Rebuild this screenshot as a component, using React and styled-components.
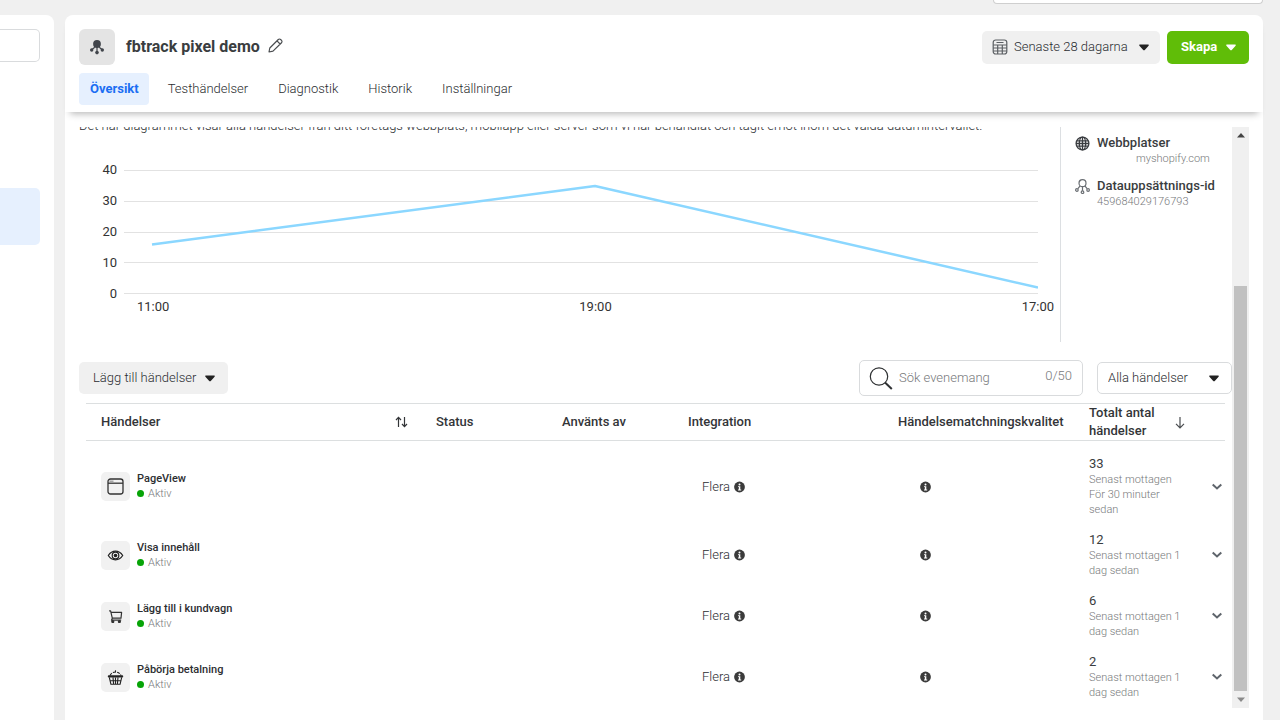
import React from "react";
import styled, { createGlobalStyle, css } from "styled-components";

const GlobalStyle = createGlobalStyle`
  *, *::before, *::after { box-sizing: border-box; }
  body {
    margin: 0;
    background: #f0f0f0;
    color: #2a2d30;
    font: 300 13px/18px Roboto, "Liberation Sans", sans-serif;
  }
  button, input, select { font: inherit; color: inherit; }
  svg { display: block; flex: none; }
`;

const Page = styled.div`
  display: flex;
  flex-direction: column;
  height: 100vh;
  min-height: 600px;
  overflow: hidden;
`;

const TopBar = styled.div`
  display: flex;
  justify-content: flex-end;
  align-items: flex-start;
  height: 15px;
  padding-right: 17px;
`;

const AccountField = styled.div`
  width: 270px;
  height: 4px;
  background: #fff;
  border: 1px solid #cfcfcf;
  border-top: 0;
  border-radius: 0 0 4px 4px;
`;

const Columns = styled.div`
  display: flex;
  flex: 1;
  gap: 11px;
  min-height: 0;
  padding-right: 17px;
`;

const SidePanel = styled.aside`
  display: flex;
  flex-direction: column;
  gap: 126px;
  width: 54px;
  padding: 14px 14px 0 0;
  background: #fff;
  border-radius: 0 8px 0 0;
`;

const SideSearch = styled.input`
  width: 100%;
  height: 33px;
  background: #fff;
  border: 1px solid #d9dbdd;
  border-left: 0;
  border-radius: 0 5px 5px 0;
`;

const SideItem = styled.a`
  display: block;
  height: 57px;
  background: #e6f0fe;
  border-radius: 0 5px 5px 0;
`;

const Main = styled.main`
  display: flex;
  flex: 1;
  flex-direction: column;
  min-width: 0;
  background: #fff;
  border-radius: 8px 8px 0 0;
`;

const Header = styled.header`
  display: flex;
  flex-direction: column;
  gap: 8px;
  padding: 14px 14px 7px;
  border-radius: 8px 8px 0 0;
  box-shadow: 0 7px 7px -5px rgba(0, 0, 0, 0.28);
`;

const HeaderRow = styled.div`
  display: flex;
  align-items: center;
  height: 36px;
`;

const PixelBadge = styled.span`
  display: grid;
  place-items: center;
  width: 36px;
  height: 36px;
  background: #e4e4e4;
  border-radius: 6px;
`;

const Title = styled.h1`
  margin: 0 8px 0 11px;
  color: #3a3d40;
  font-size: 16px;
  line-height: 20px;
  font-weight: 700;
`;

const IconButton = styled.button`
  display: grid;
  place-items: center;
  padding: 0;
  background: none;
  border: 0;
`;

const EditButton = styled(IconButton)`
  padding-bottom: 4px;
`;

const Actions = styled.div`
  display: flex;
  gap: 7px;
  margin-left: auto;
`;

const box = css`
  display: flex;
  align-items: center;
  border-radius: 5px;
  border: 1px solid ${(p) => (p.$outlined ? "#d9dbdd" : "transparent")};
  background: ${(p) => (p.$outlined ? "#fff" : p.$primary ? "#60bd08" : "#f0f0f0")};
`;

const SelectBox = styled.label`
  ${box}
  gap: 6px;
  width: ${(p) => p.$width}px;
  height: ${(p) => p.$height}px;
  padding: 0 ${(p) => (p.$outlined ? 12 : 10)}px 0 ${(p) => (p.$outlined ? 10 : 9)}px;
`;

const Select = styled.select`
  flex: 1;
  min-width: 0;
  padding: 0;
  appearance: none;
  background: none;
  border: 0;
`;

const MenuButton = styled.button`
  ${box}
  justify-content: space-between;
  width: ${(p) => p.$width}px;
  height: ${(p) => p.$height}px;
  padding: 0 12px 0 13px;
  color: ${(p) => (p.$primary ? "#fff" : "inherit")};
  font-weight: ${(p) => (p.$primary ? 700 : 300)};
`;

const Tabs = styled.nav`
  display: flex;
  gap: 8px;
`;

const Tab = styled.a`
  padding: 7px ${(p) => (p.$active ? 10 : 11)}px 7px 11px;
  border-radius: 4px;
  color: ${(p) => (p.$active ? "#1b6ef3" : "inherit")};
  background: ${(p) => (p.$active ? "#e6f0fe" : "transparent")};
  font-weight: ${(p) => (p.$active ? 700 : 300)};
  text-decoration: none;
`;

const ScrollRegion = styled.div`
  display: flex;
  flex: 1;
  min-height: 0;
  margin: 15px 14px 12px;
`;

const Content = styled.div`
  flex: 1;
  min-width: 0;
  overflow: hidden;
`;

const Overview = styled.section`
  display: flex;
  height: 215px;
`;

const ChartPane = styled.div`
  flex: 1;
  min-width: 0;
`;

const Description = styled.p`
  margin: -10px 0 27px;
  white-space: nowrap;
`;

const Chart = styled.figure`
  display: grid;
  grid-template-columns: 38px 1fr;
  column-gap: 7px;
  margin: 0;
  padding-right: 22px;
  color: #333;
  font-weight: 400;
`;

const YAxis = styled.div`
  display: flex;
  flex-direction: column;
  justify-content: space-between;
  height: 140px;
  line-height: 16px;
  text-align: right;
`;

const Plot = styled.svg`
  width: 100%;
  height: 140px;
`;

const XAxis = styled.div`
  display: flex;
  grid-column: 2;
  justify-content: space-between;
  margin: -4px -16px 0 13px;
`;

const Details = styled.aside`
  display: flex;
  flex-direction: column;
  gap: 11px;
  width: 172px;
  padding: 8px 0 0 14px;
  border-left: 1px solid #dcdfe2;
`;

const Detail = styled.div`
  display: flex;
  gap: 7px;
  line-height: 16px;
`;

const DetailIcon = styled.span`
  padding-top: 1px;
`;

const DetailName = styled.div`
  color: #3a3d40;
  font-weight: 500;
`;

const Muted = styled.div`
  padding-left: ${(p) => p.$indent || 0}px;
  color: #77797b;
  font-size: 11px;
  line-height: ${(p) => p.$line || 15}px;
`;

const Toolbar = styled.div`
  display: flex;
  align-items: center;
  gap: 14px;
  height: 36px;
  margin: 18px 0 7px;
`;

const SearchBox = styled.label`
  display: flex;
  align-items: center;
  gap: 6px;
  width: 224px;
  height: 36px;
  margin-left: auto;
  padding: 0 10px 0 8px;
  border: 1px solid #d9dbdd;
  border-radius: 5px;
  color: #77797b;
`;

const SearchInput = styled.input`
  flex: 1;
  min-width: 0;
  padding: 0;
  background: none;
  border: 0;
  &::placeholder { color: #77797b; opacity: 1; }
`;

const Counter = styled.span`
  padding-bottom: 4px;
`;

const TableWrap = styled.div`
  padding: 0 7px;
`;

const Table = styled.table`
  width: 100%;
  table-layout: fixed;
  border-collapse: separate;
  border-spacing: 0;
`;

const Col = styled.col`
  width: ${(p) => (p.$width ? `${p.$width}px` : "auto")};
`;

const Th = styled.th`
  height: 38px;
  padding: 0 ${(p) => p.$right || 0}px 0 15px;
  border: solid #dcdfe0;
  border-width: 1px 0;
  color: #333538;
  font-weight: 500;
  text-align: left;
`;

const ThInner = styled.div`
  display: flex;
  align-items: center;
  justify-content: space-between;
`;

const Spacer = styled.td`
  height: 7px;
  padding: 0;
`;

const Td = styled.td`
  padding: 8px ${(p) => p.$right || 0}px 7px ${(p) => (p.$left === undefined ? 15 : p.$left)}px;
  vertical-align: middle;
`;

const Inline = styled.div`
  display: flex;
  align-items: center;
  gap: ${(p) => p.$gap}px;
`;

const EventIcon = styled.span`
  display: grid;
  place-items: center;
  width: 29px;
  height: 29px;
  background: #f1f1f1;
  border-radius: 5px;
`;

const EventName = styled.div`
  color: #2c2e31;
  font-size: 11px;
  line-height: 14px;
  font-weight: 500;
`;

const Dot = styled.span`
  width: 7px;
  height: 7px;
  border-radius: 50%;
  background: #07a407;
`;

const Count = styled.div`
  color: #3a3d40;
  line-height: 16px;
  font-weight: 400;
`;

const Chevron = styled(IconButton)`
  margin-left: auto;
`;

const ScrollBar = styled.div`
  display: flex;
  flex-direction: column;
  align-items: center;
  width: 17px;
  background: #f0f0f0;
`;

const ScrollArrow = styled.span`
  display: grid;
  place-items: center;
  height: 17px;
`;

const ScrollTrack = styled.div`
  display: flex;
  flex: 1;
  flex-direction: column;
  justify-content: flex-end;
`;

const ScrollThumb = styled.div`
  width: 13px;
  height: 74%;
  background: #c1c1c1;
`;

const Caret = ({ color = "#222" }) => (
  <svg width="10" height="7" viewBox="0 0 10 7" fill={color}>
    <path d="M1 .5h8c.8 0 1 .7.6 1.2L6 5.8c-.6.7-1.4.7-2 0L.4 1.7C0 1.2.2.5 1 .5z" />
  </svg>
);

const PixelIcon = () => (
  <svg width="16" height="16" viewBox="0 0 16 16" fill="#41454b" stroke="#41454b">
    <circle cx="8" cy="5" r="3.9" stroke="none" />
    <path d="M8 8v5M5.8 8.2 3 10.5M10.2 8.2 13 10.5" strokeWidth="1.2" />
    <circle cx="2.7" cy="11" r="1.7" stroke="none" />
    <circle cx="8" cy="13.6" r="1.8" stroke="none" />
    <circle cx="13.3" cy="11" r="1.7" stroke="none" />
  </svg>
);

const DatasetIcon = () => (
  <svg width="15" height="15" viewBox="0 0 15 15" fill="none" stroke="#6a6e73" strokeWidth="1.2">
    <circle cx="7.5" cy="4.2" r="3.5" />
    <path d="M7.5 7.7v4.1M5.1 6.9 2.9 9.7M9.9 6.9l2.2 2.8" />
    <circle cx="1.9" cy="11" r="1.3" />
    <circle cx="7.5" cy="13.2" r="1.3" />
    <circle cx="13.1" cy="11" r="1.3" />
  </svg>
);

const PencilIcon = () => (
  <svg width="15" height="15" viewBox="0 0 15 15" fill="none" stroke="#4a4d50" strokeWidth="1.2" strokeLinejoin="round">
    <path d="M1 14l.8-4L10.3 1.5a1.6 1.6 0 0 1 2.3 0l.9.9a1.6 1.6 0 0 1 0 2.3L5 13.2zM9 2.9l3.1 3.1" />
  </svg>
);

const CalendarIcon = () => (
  <svg width="16" height="16" viewBox="0 0 16 16" fill="none" stroke="#5b5f63" strokeWidth="1.2">
    <rect x="1.2" y="1" width="13.6" height="14" rx="2.5" />
    <path d="M4.5 3.5h7M1.2 6h13.6M1.2 9h13.6M1.2 12h13.6M5.7 6v9M10.3 6v9" />
  </svg>
);

const GlobeIcon = () => (
  <svg width="15" height="15" viewBox="0 0 15 15" fill="none" stroke="#3a3d40" strokeWidth="1.3">
    <circle cx="7.5" cy="7.5" r="6.4" />
    <ellipse cx="7.5" cy="7.5" rx="3.2" ry="6.4" />
    <path d="M7.5 1v13M1 7.5h13M1.9 4.9h11.2M1.9 10.1h11.2" />
  </svg>
);

const SearchIcon = () => (
  <svg width="25" height="25" viewBox="0 0 25 25" fill="none" stroke="#2f3133">
    <circle cx="11" cy="10.5" r="8.7" strokeWidth="1.2" />
    <path d="M17 16.5l6.8 6.4" strokeWidth="2" />
  </svg>
);

const SortIcon = () => (
  <svg width="13" height="12" viewBox="0 0 13 12" fill="none" stroke="#333538" strokeWidth="1.2">
    <path d="M3.5 11V1.5M1 4l2.5-2.7L6 4M9.5 1v9.5M7 8l2.5 2.7L12 8" />
  </svg>
);

const ArrowDown = () => (
  <svg width="10" height="13" viewBox="0 0 10 13" fill="none" stroke="#4a4d50" strokeWidth="1.2">
    <path d="M5 1v10.5M1 7.8l4 4 4-4" />
  </svg>
);

const InfoIcon = () => (
  <svg width="11" height="12" viewBox="0 0 11 12">
    <circle cx="5.5" cy="6" r="5.4" fill="#3b3b3b" />
    <circle cx="5.5" cy="3.4" r="1" fill="#fff" />
    <path d="M4 5.2h2.3v3.3h.9v.9H4v-.9h.8V6.1H4z" fill="#fff" />
  </svg>
);

const ChevronIcon = () => (
  <svg width="12" height="8" viewBox="0 0 12 8" fill="none" stroke="#5f656c" strokeWidth="2">
    <path d="M1.7 1.5L6 5.5l4.3-4" />
  </svg>
);

const WindowIcon = () => (
  <svg width="17" height="17" viewBox="0 0 17 17" fill="none" stroke="#333" strokeWidth="1.3">
    <rect x="1" y="1" width="15" height="15" rx="2.5" />
    <path d="M1 5.2h15" />
    <path d="M2.5 3.2h4" stroke="#999" />
  </svg>
);

const EyeIcon = () => (
  <svg width="17" height="11" viewBox="0 0 17 11" fill="none" stroke="#222" strokeWidth="1.2">
    <path d="M1.3 5.5C3.100 2.700 5.700 1.200 8.500 1.200s5.400 1.500 7.200 4.300C13.900 8.300 11.300 9.800 8.500 9.800S3.100 8.300 1.300 5.500z" />
    <circle cx="8.5" cy="5.5" r="3.3" />
    <circle cx="8.5" cy="5.5" r="1.8" fill="#222" stroke="none" />
  </svg>
);

const CartIcon = () => (
  <svg width="15" height="13" viewBox="0 0 15 13" fill="none" stroke="#333" strokeWidth="1.2" strokeLinejoin="round">
    <path d="M1.1.8h1.500l1.700 7.400h8.700l.6-5.800H3M4.300 8.200 3.500 10.200h9.700" />
    <circle cx="4.800" cy="11.600" r="1" fill="#333" />
    <circle cx="11.400" cy="11.600" r="1" fill="#333" />
  </svg>
);

const BasketIcon = () => (
  <svg width="17" height="15" viewBox="0 0 17 15" fill="none" stroke="#222" strokeWidth="1.1">
    <path d="M3 5.500C4 3.300 6 2 8.500 2S13 3.300 14 5.500" strokeDasharray="3 1.2" />
    <path d="M8.500.3v2" />
    <rect x=".8" y="5.300" width="15.400" height="2.200" rx="1" fill="#222" stroke="none" />
    <path d="M2.300 7.400l1.600 6.800h9.200l1.600-6.800M3 10.700h11M6 7.400l.6 6.800M11 7.400l-.6 6.800M8.500 7.400v6.800" />
  </svg>
);

const Triangle = ({ up }) => (
  <svg width="8" height="5" viewBox="0 0 8 5" fill={up ? "#444" : "#8a8a8a"}>
    <path d={up ? "M4 0l4 4.5H0z" : "M0 .5h8L4 5z"} />
  </svg>
);

const tabs = ["Översikt", "Testhändelser", "Diagnostik", "Historik", "Inställningar"];
const columnWidths = [null, 126, 126, 210, 191, 121, 30];
const events = [
  { name: "PageView", icon: <WindowIcon />, total: 33, received: "Senast mottagen För 30 minuter sedan" },
  { name: "Visa innehåll", icon: <EyeIcon />, total: 12, received: "Senast mottagen 1 dag sedan" },
  { name: "Lägg till i kundvagn", icon: <CartIcon />, total: 6, received: "Senast mottagen 1 dag sedan" },
  { name: "Påbörja betalning", icon: <BasketIcon />, total: 2, received: "Senast mottagen 1 dag sedan" },
];

function ActivityChart() {
  return (
    <Chart>
      <YAxis>
        {[40, 30, 20, 10, 0].map((v) => <span key={v}>{v}</span>)}
      </YAxis>
      <Plot viewBox="0 0 914 140" preserveAspectRatio="none">
        {[0, 1, 2, 3, 4].map((i) => (
          <path key={i} d={`M0 ${8.5 + i * 31 - (i > 2 ? 1 : 0)}H914`} stroke="#e2e2e2" vectorEffect="non-scaling-stroke" />
        ))}
        <path
          d="M28 82.5L471 24L914 125.5"
          fill="none"
          stroke="#8bd7ff"
          strokeWidth="2.5"
          strokeLinejoin="round"
          vectorEffect="non-scaling-stroke"
        />
      </Plot>
      <XAxis>
        <span>11:00</span>
        <span>19:00</span>
        <span>17:00</span>
      </XAxis>
    </Chart>
  );
}

function EventRow({ event }) {
  return (
    <tr>
      <Td>
        <Inline $gap={7}>
          <EventIcon>{event.icon}</EventIcon>
          <div>
            <EventName>{event.name}</EventName>
            <Inline $gap={4}>
              <Dot />
              <Muted>Aktiv</Muted>
            </Inline>
          </div>
        </Inline>
      </Td>
      <Td />
      <Td />
      <Td $left={29}>
        <Inline $gap={4}>
          Flera <InfoIcon />
        </Inline>
      </Td>
      <Td $left={37}><InfoIcon /></Td>
      <Td $right={10}>
        <Count>{event.total}</Count>
        <Muted>{event.received}</Muted>
      </Td>
      <Td $left={0} $right={2}>
        <Chevron aria-label={`Visa ${event.name}`}><ChevronIcon /></Chevron>
      </Td>
    </tr>
  );
}

export default function App() {
  return (
    <Page>
      <GlobalStyle />
      <TopBar><AccountField /></TopBar>
      <Columns>
        <SidePanel>
          <SideSearch aria-label="Sök" />
          <SideItem href="#" aria-label="fbtrack pixel demo" />
        </SidePanel>
        <Main>
          <Header>
            <HeaderRow>
              <PixelBadge><PixelIcon /></PixelBadge>
              <Title>fbtrack pixel demo</Title>
              <EditButton aria-label="Redigera namn"><PencilIcon /></EditButton>
              <Actions>
                <SelectBox $width={178} $height={33}>
                  <CalendarIcon />
                  <Select aria-label="Datumintervall"><option>Senaste 28 dagarna</option></Select>
                  <Caret />
                </SelectBox>
                <MenuButton $primary $width={82} $height={33}>
                  Skapa <Caret color="#fff" />
                </MenuButton>
              </Actions>
            </HeaderRow>
            <Tabs>
              {tabs.map((t, i) => <Tab key={t} href="#" $active={i === 0}>{t}</Tab>)}
            </Tabs>
          </Header>
          <ScrollRegion>
            <Content>
              <Overview>
                <ChartPane>
                  <Description>
                    Det här diagrammet visar alla händelser från ditt företags webbplats, mobilapp eller server som vi har behandlat och tagit emot inom det valda datumintervallet.
                  </Description>
                  <ActivityChart />
                </ChartPane>
                <Details>
                  <Detail>
                    <DetailIcon><GlobeIcon /></DetailIcon>
                    <div>
                      <DetailName>Webbplatser</DetailName>
                      <Muted $indent={39} $line={16}>myshopify.com</Muted>
                    </div>
                  </Detail>
                  <Detail>
                    <DetailIcon><DatasetIcon /></DetailIcon>
                    <div>
                      <DetailName>Datauppsättnings-id</DetailName>
                      <Muted $line={16}>459684029176793</Muted>
                    </div>
                  </Detail>
                </Details>
              </Overview>
              <Toolbar>
                <MenuButton $width={149} $height={32}>Lägg till händelser <Caret /></MenuButton>
                <SearchBox>
                  <SearchIcon />
                  <SearchInput aria-label="Sök evenemang" placeholder="Sök evenemang" />
                  <Counter>0/50</Counter>
                </SearchBox>
                <SelectBox $outlined $width={135} $height={32}>
                  <Select aria-label="Filter"><option>Alla händelser</option></Select>
                  <Caret />
                </SelectBox>
              </Toolbar>
              <TableWrap>
                <Table>
                  <colgroup>
                    {columnWidths.map((w, i) => <Col key={i} $width={w} />)}
                  </colgroup>
                  <thead>
                    <tr>
                      <Th $right={13}><ThInner>Händelser <SortIcon /></ThInner></Th>
                      <Th>Status</Th>
                      <Th>Använts av</Th>
                      <Th>Integration</Th>
                      <Th>Händelsematchningskvalitet</Th>
                      <Th $right={10}><ThInner>Totalt antal händelser <ArrowDown /></ThInner></Th>
                      <Th />
                    </tr>
                  </thead>
                  <tbody>
                    <tr><Spacer colSpan={7} /></tr>
                    {events.map((e) => <EventRow key={e.name} event={e} />)}
                  </tbody>
                </Table>
              </TableWrap>
            </Content>
            <ScrollBar>
              <ScrollArrow><Triangle up /></ScrollArrow>
              <ScrollTrack><ScrollThumb /></ScrollTrack>
              <ScrollArrow><Triangle /></ScrollArrow>
            </ScrollBar>
          </ScrollRegion>
        </Main>
      </Columns>
    </Page>
  );
}
